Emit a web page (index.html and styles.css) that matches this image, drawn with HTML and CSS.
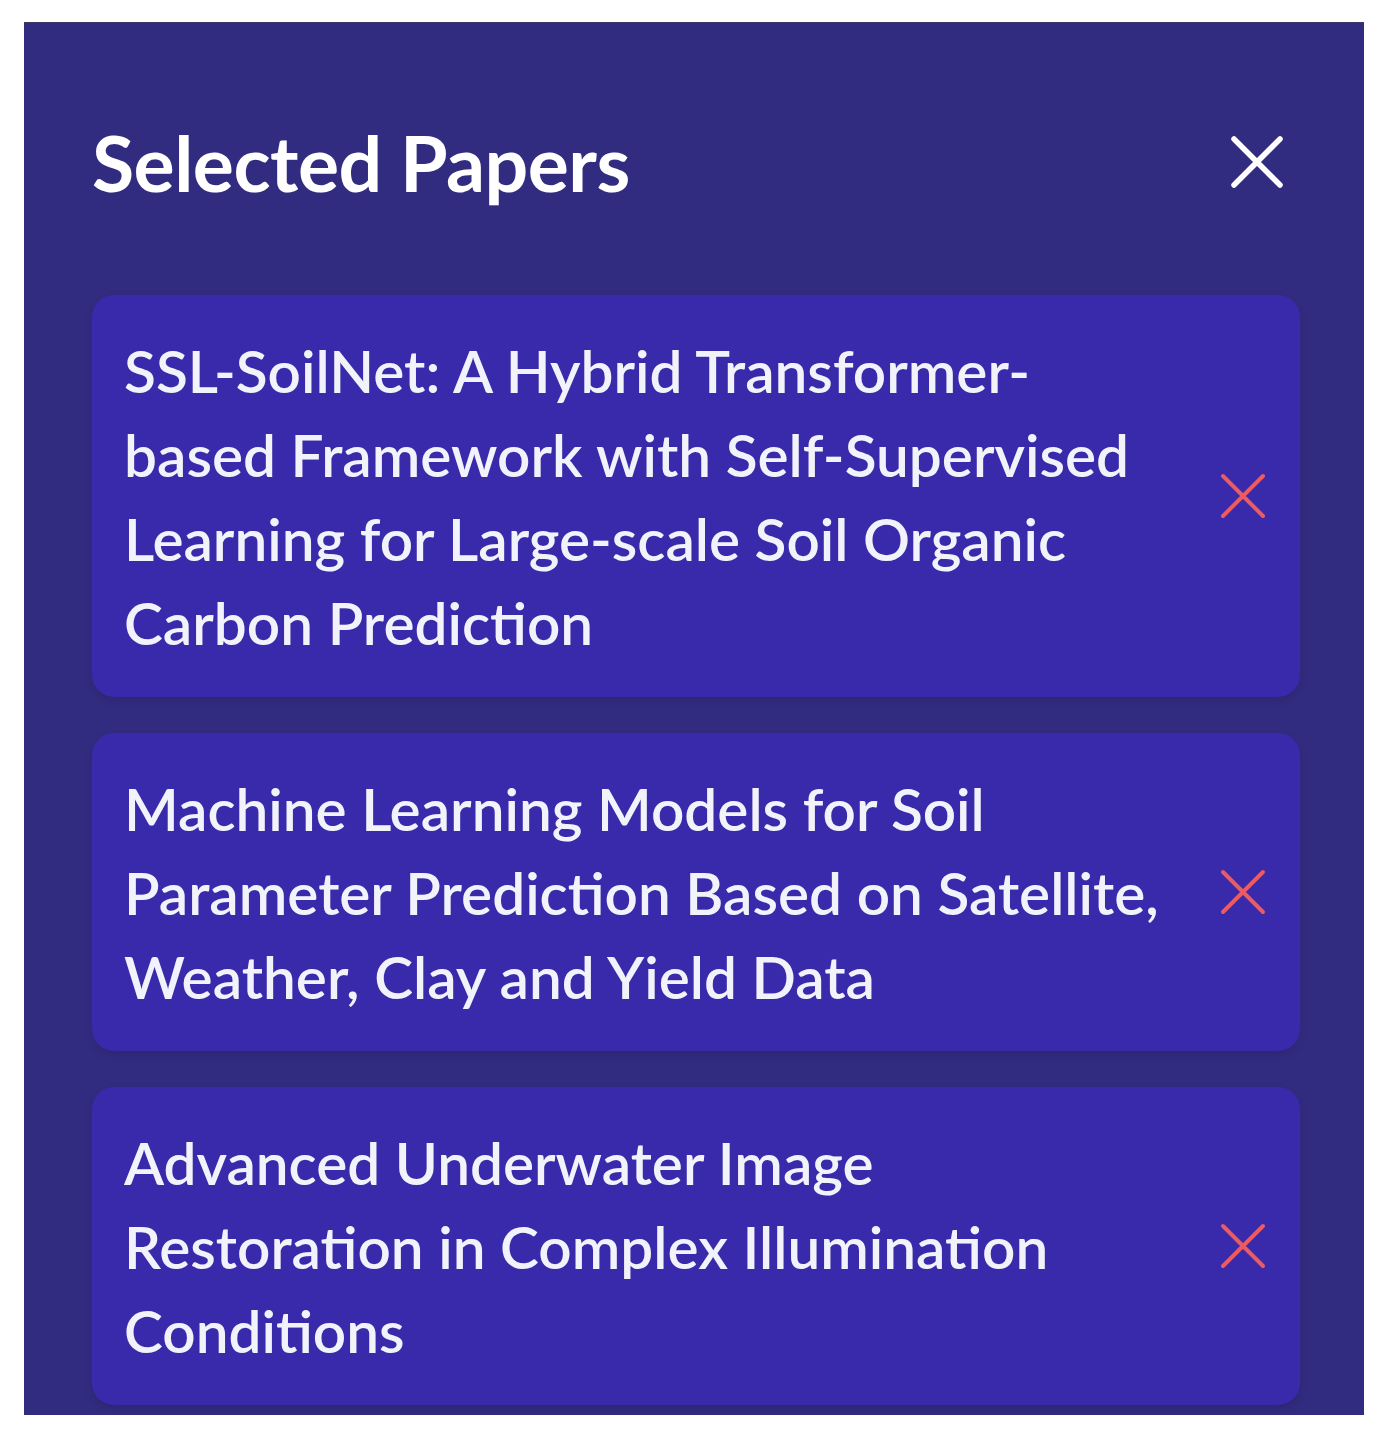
FILE: index.html
```html
<!DOCTYPE html>
<html lang="en">
<head>
<meta charset="utf-8">
<title>Selected Papers</title>
<link rel="stylesheet" href="styles.css">
</head>
<body>
<aside class="panel">
  <header class="panel-header">
    <h2 class="panel-title">Selected Papers</h2>
    <button class="close-btn" aria-label="Close">
      <svg viewBox="0 0 54 54" width="54" height="54"><path d="M4 4 L50 50 M50 4 L4 50" stroke="#ffffff" stroke-width="5.5" stroke-linecap="round" fill="none"/></svg>
    </button>
  </header>
  <ul class="paper-list">
    <li class="paper-card">
      <span class="paper-title">SSL-SoilNet: A Hybrid Transformer-based Framework with Self-Supervised Learning for Large-scale Soil Organic Carbon Prediction</span>
      <button class="remove-btn" aria-label="Remove">
        <svg viewBox="0 0 46 46" width="46" height="46"><path d="M3 3 L43 43 M43 3 L3 43" stroke="#ec5a62" stroke-width="4" stroke-linecap="round" fill="none"/></svg>
      </button>
    </li>
    <li class="paper-card">
      <span class="paper-title">Machine Learning Models for Soil Parameter Prediction Based on Satellite, Weather, Clay and Yield Data</span>
      <button class="remove-btn" aria-label="Remove">
        <svg viewBox="0 0 46 46" width="46" height="46"><path d="M3 3 L43 43 M43 3 L3 43" stroke="#ec5a62" stroke-width="4" stroke-linecap="round" fill="none"/></svg>
      </button>
    </li>
    <li class="paper-card">
      <span class="paper-title">Advanced Underwater Image Restoration in Complex Illumination Conditions</span>
      <button class="remove-btn" aria-label="Remove">
        <svg viewBox="0 0 46 46" width="46" height="46"><path d="M3 3 L43 43 M43 3 L3 43" stroke="#ec5a62" stroke-width="4" stroke-linecap="round" fill="none"/></svg>
      </button>
    </li>
  </ul>
</aside>
</body>
</html>
```
FILE: styles.css
```css
html, body {
  margin: 0;
  padding: 0;
  background: #ffffff;
}
body {
  padding: 22px 0 0 24px;
  font-family: Lato, "Open Sans", sans-serif;
}
.panel {
  box-sizing: border-box;
  width: 1340px;
  height: 1393px;
  background: #322c81;
  border-top: 1px solid #3b3963;
  padding: 92px 64px 11px 68px;
  overflow: hidden;
  display: flex;
  flex-direction: column;
}
.panel-header {
  display: flex;
  align-items: center;
  justify-content: space-between;
  height: 94px;
  margin-bottom: 86px;
}
.panel-title {
  margin: 0;
  color: #ffffff;
  font-size: 77px;
  font-weight: 700;
  line-height: 94px;
  letter-spacing: -0.5px;
}
.close-btn {
  background: none;
  border: 0;
  padding: 0;
  margin-right: 16px;
  display: flex;
}
.paper-list {
  list-style: none;
  margin: 0;
  padding: 0;
  display: flex;
  flex-direction: column;
  gap: 36px;
}
.paper-card {
  display: flex;
  align-items: center;
  justify-content: space-between;
  gap: 40px;
  background: #382aaa;
  border-radius: 22px;
  padding: 33px 34px 33px 32px;
  box-shadow: 0 4px 8px rgba(0, 0, 0, 0.12);
}
.paper-title {
  color: #f2f2fb;
  font-size: 58.5px;
  font-weight: 600;
  line-height: 84px;
  flex: 1;
}
.remove-btn {
  background: none;
  border: 0;
  padding: 0;
  display: flex;
  flex-shrink: 0;
}
```
